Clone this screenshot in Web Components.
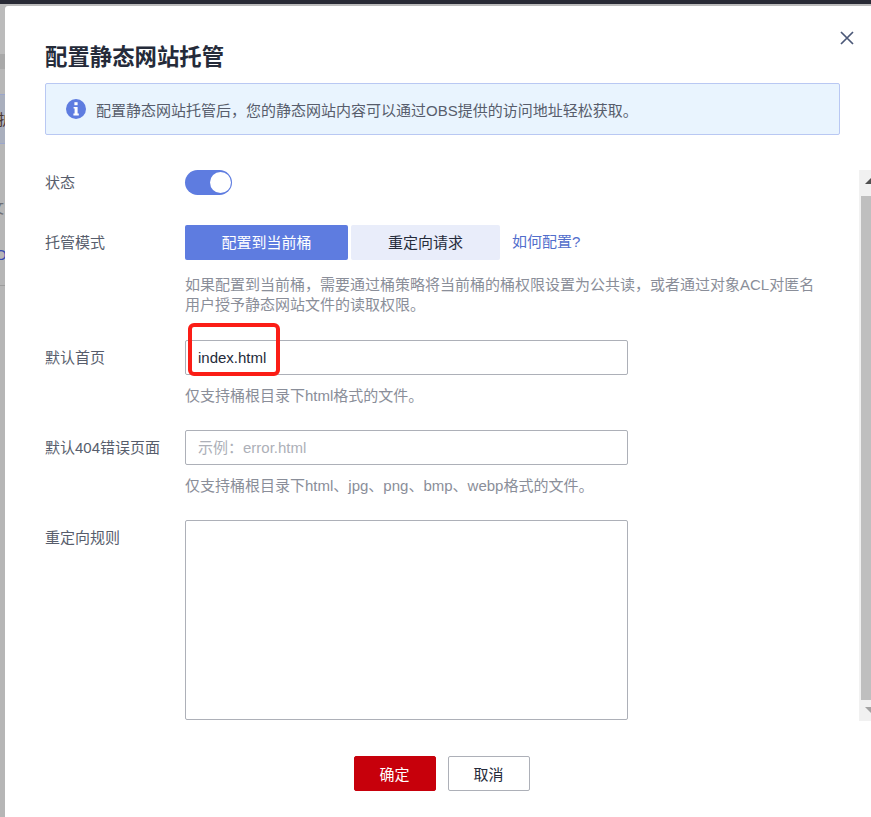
<!DOCTYPE html>
<html lang="zh-CN">
<head>
<meta charset="utf-8">
<title>配置静态网站托管</title>
<style>
  html, body { margin: 0; height: 100%; overflow: hidden; }
  body {
    font-family: "Liberation Sans", "Noto Sans CJK SC", sans-serif;
    font-size: 15px;
    color: #575d6c;
    background: #b8b8b8;
  }
</style>
</head>
<body>
<site-dialog heading="配置静态网站托管">
  <info-note>配置静态网站托管后，您的静态网站内容可以通过OBS提供的访问地址轻松获取。</info-note>
  <form-row label="状态" height="28" after="28" label-top="1"><toggle-switch></toggle-switch></form-row>
  <form-row label="托管模式" height="35" hint-gap="15">
    <mode-tabs></mode-tabs>
    <span slot="hint">如果配置到当前桶，需要通过桶策略将当前桶的桶权限设置为公共读，或者通过对象ACL对匿名<br>用户授予静态网站文件的读取权限。</span>
  </form-row>
  <form-row label="默认首页" height="35" before="25" hint-gap="11">
    <text-box value="index.html" marked></text-box>
    <span slot="hint">仅支持桶根目录下html格式的文件。</span>
  </form-row>
  <form-row label="默认404错误页面" height="35" before="24" hint-gap="11">
    <text-box placeholder="示例：error.html"></text-box>
    <span slot="hint">仅支持桶根目录下html、jpg、png、bmp、webp格式的文件。</span>
  </form-row>
  <form-row label="重定向规则" height="200" before="24"><text-box tall></text-box></form-row>
</site-dialog>

<script>
class SiteDialog extends HTMLElement {
  constructor() {
    super();
    const shadow = this.attachShadow({ mode: 'open' });
    shadow.innerHTML = `
      <style>
        :host { display: block; height: 100vh; overflow: hidden; }
        .topbar { height: 4px; background: #282a35; }
        .gap { height: 2px; background: #bcbcbc; }
        .stage { display: flex; height: 811px; }
        /* strip of the page behind the dialog */
        .behind {
          width: 5px; flex: none; background: #b6b6b6; overflow: hidden;
          display: flex; flex-direction: column; font-size: 15px; line-height: 20px;
        }
        .behind div { flex: none; white-space: nowrap; box-sizing: border-box; }
        .b1 { height: 48px; background: #bbb; }
        .b2 { height: 15px; background: #a9a9a9; }
        .b3 { height: 25px; background: #b7b7b7; }
        .b4 {
          height: 50px; background: #a9afbd;
          border-top: 1px solid #9ba6cb; border-bottom: 1px solid #9ba6cb;
          padding-top: 15px; margin-left: -2px; color: #4a3530;
        }
        .b5 { height: 74px; padding-top: 54px; margin-left: -11px; color: #6d6f75; }
        .b6 { height: 47px; padding-top: 27px; margin-left: -5px; color: #3a4cb0; }
        .b7 { height: 20px; }
        .b8 { height: 1px; background: #9d9d9d; }
        .dialog {
          flex: 1; background: #fff; border-top-left-radius: 3px;
          padding: 37px 31px 0 40px; display: flex; flex-direction: column;
          position: relative; min-width: 0;
        }
        h2 {
          margin: 0 0 10px; font-size: 22.4px; line-height: 30px; font-weight: 700; color: #252b3a;
        }
        .close {
          position: absolute; right: 17px; top: 25px; width: 14px; height: 14px;
        }
        .body { flex: none; height: 551px; margin-right: -31px; position: relative; overflow: hidden; }
        .rail {
          position: absolute; right: 0; top: 0; width: 12px; height: 551px;
          background: #f1f1f1; display: flex; flex-direction: column;
        }
        .thumb { flex: 1; background: #bfbfbf; margin-left: 2px; }
        .arrow { height: 26px; flex: none; display: block; }
        .arrow.down { height: 21px; }
        .rows { margin-top: -2px; }
        .actions { display: flex; justify-content: center; gap: 12px; margin-top: 35px; padding-right: 2px; }
        button {
          width: 82px; height: 35px; box-sizing: border-box; border-radius: 2px;
          font: 15px "Liberation Sans", "Noto Sans CJK SC", sans-serif; padding: 0;
        }
        .ok { background: #c7000b; border: 1px solid #c7000b; color: #fff; }
        .cancel { background: #fff; border: 1px solid #adb0b8; color: #252b3a; }
      </style>
      <div class="topbar"></div>
      <div class="gap"></div>
      <div class="stage">
        <div class="behind">
          <div class="b1"></div>
          <div class="b2"></div>
          <div class="b3"></div>
          <div class="b4">护</div>
          <div class="b5">文</div>
          <div class="b6">O</div>
          <div class="b7"></div>
          <div class="b8"></div>
        </div>
        <div class="dialog">
          <h2></h2>
          <svg class="close" viewBox="0 0 14 14" fill="none" stroke="#4b5878" stroke-width="1.7"><path d="M1 1l12 12M13 1L1 13"/></svg>
          <slot name="note"></slot>
          <div class="body">
            <div class="rows"><slot></slot></div>
            <div class="rail">
              <svg class="arrow" viewBox="0 0 12 26"><path d="M6 14l6-6 6 6z" fill="#505050"/></svg>
              <div class="thumb"></div>
              <svg class="arrow down" viewBox="0 0 12 21"><path d="M6 7h12l-6 6-6-6z" fill="#a3a3a3"/></svg>
            </div>
          </div>
          <div class="actions">
            <button class="ok">确定</button>
            <button class="cancel">取消</button>
          </div>
        </div>
      </div>
    `;
    shadow.querySelector('h2').textContent = this.getAttribute('heading');
    const note = this.querySelector('info-note');
    if (note) note.slot = 'note';
  }
}

class InfoNote extends HTMLElement {
  constructor() {
    super();
    const shadow = this.attachShadow({ mode: 'open' });
    shadow.innerHTML = `
      <style>
        :host {
          display: flex; align-items: center; gap: 10px; box-sizing: border-box;
          height: 52px; padding: 0 20px; margin-bottom: 35px;
          background: #e9f4fe; border: 1px solid #b9c8f3; border-radius: 2px;
          color: #575d6c; font-size: 15px;
        }
        svg { flex: none; }
      </style>
      <svg width="20" height="20" viewBox="0 0 20 20">
        <circle cx="10" cy="10" r="10" fill="#5e7ce0"/>
        <rect x="8.4" y="3.2" width="3.2" height="3" fill="#fff"/>
        <path d="M7.6 8h4v6.6h1.2V16.4H7.4v-1.8h1.2V9.6h-1z" fill="#fff"/>
      </svg>
      <span><slot></slot></span>
    `;
  }
}

class FormRow extends HTMLElement {
  constructor() {
    super();
    const shadow = this.attachShadow({ mode: 'open' });
    const h = +this.getAttribute('height');
    const before = this.getAttribute('before') || 0;
    const after = this.getAttribute('after') || 0;
    const hintGap = this.getAttribute('hint-gap') || 10;
    const labelTop = this.getAttribute('label-top') || 0;
    const lh = h > 35 ? 35 : h;
    shadow.innerHTML = `
      <style>
        :host {
          display: grid; grid-template-columns: 140px 1fr;
          margin-top: ${before}px; margin-bottom: ${after}px;
        }
        .label { height: ${lh}px; line-height: ${lh}px; padding-top: ${labelTop}px; box-sizing: content-box; color: #575d6c; }
        .field { min-width: 0; }
        .main { height: ${h}px; display: flex; align-items: center; }
        .hint { color: #8a8e99; line-height: 20px; padding-top: ${hintGap}px; }
        .hint.empty { display: none; }
      </style>
      <div class="label">${this.getAttribute('label')}</div>
      <div class="field">
        <div class="main"><slot></slot></div>
        <div class="hint"><slot name="hint"></slot></div>
      </div>
    `;
    if (!this.querySelector('[slot=hint]')) shadow.querySelector('.hint').classList.add('empty');
  }
}

class ToggleSwitch extends HTMLElement {
  constructor() {
    super();
    const shadow = this.attachShadow({ mode: 'open' });
    shadow.innerHTML = `
      <style>
        :host {
          display: flex; align-items: center; justify-content: flex-end; box-sizing: border-box;
          width: 47px; height: 25px; border-radius: 13px; background: #5e7ce0; padding-right: 1px;
        }
        i { display: block; width: 21px; height: 21px; border-radius: 50%; background: #fff; }
      </style>
      <i></i>
    `;
  }
}

class ModeTabs extends HTMLElement {
  constructor() {
    super();
    const shadow = this.attachShadow({ mode: 'open' });
    shadow.innerHTML = `
      <style>
        :host { display: flex; align-items: center; }
        div {
          height: 35px; line-height: 35px; text-align: center; border-radius: 2px;
        }
        .on { width: 163px; background: #5e7ce0; color: #fff; margin-right: 3px; }
        .off { width: 149px; background: #e9edfa; color: #252b3a; margin-right: 12px; }
        a { color: #526ecc; text-decoration: none; margin-top: -4px; }
      </style>
      <div class="on">配置到当前桶</div>
      <div class="off">重定向请求</div>
      <a href="#">如何配置?</a>
    `;
  }
}

class TextBox extends HTMLElement {
  constructor() {
    super();
    const shadow = this.attachShadow({ mode: 'open' });
    const tall = this.hasAttribute('tall');
    const value = this.getAttribute('value');
    const placeholder = this.getAttribute('placeholder');
    shadow.innerHTML = `
      <style>
        :host { display: block; position: relative; width: 443px; height: ${tall ? 200 : 35}px; }
        .box {
          box-sizing: border-box; width: 100%; height: 100%; padding: 0 12px;
          border: 1px solid #adb0b8; border-radius: 2px; line-height: 33px; background: #fff;
          color: #252b3a;
        }
        .ph { color: #adb0b8; }
        .mark {
          position: absolute; left: 3px; top: -17px; width: 92px; height: 53px; box-sizing: border-box;
          border: 4px solid #fb1d16; border-radius: 6px;
        }
      </style>
      <div class="box">${value || ''}${placeholder ? `<span class="ph">${placeholder}</span>` : ''}</div>
      ${this.hasAttribute('marked') ? '<div class="mark"></div>' : ''}
    `;
  }
}

customElements.define('site-dialog', SiteDialog);
customElements.define('info-note', InfoNote);
customElements.define('form-row', FormRow);
customElements.define('toggle-switch', ToggleSwitch);
customElements.define('mode-tabs', ModeTabs);
customElements.define('text-box', TextBox);
</script>
</body>
</html>
